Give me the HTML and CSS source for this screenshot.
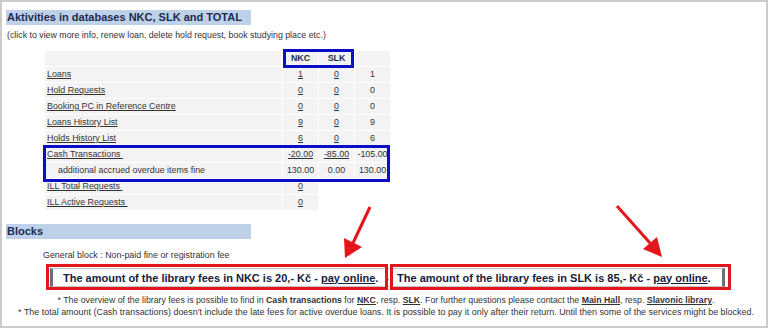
FILE: index.html
```html
<!DOCTYPE html>
<html>
<head>
<meta charset="utf-8">
<link rel="stylesheet" href="styles.css">
</head>
<body>
<div class="frame">
  <div class="section-title">Aktivities in databases NKC, SLK and TOTAL</div>
  <div class="hint">(click to view more info, renew loan, delete hold request, book studying place etc.)</div>
  <table class="activity">
    <tr class="head"><td class="label"></td><td class="num">NKC</td><td class="num">SLK</td><td class="num"></td></tr>
    <tr><td class="label"><a href="#">Loans</a></td><td class="num"><a href="#">1</a></td><td class="num"><a href="#">0</a></td><td class="num">1</td></tr>
    <tr><td class="label"><a href="#">Hold Requests</a></td><td class="num"><a href="#">0</a></td><td class="num"><a href="#">0</a></td><td class="num">0</td></tr>
    <tr><td class="label"><a href="#">Booking PC in Reference Centre</a></td><td class="num"><a href="#">0</a></td><td class="num"><a href="#">0</a></td><td class="num">0</td></tr>
    <tr><td class="label"><a href="#">Loans History List</a></td><td class="num"><a href="#">9</a></td><td class="num"><a href="#">0</a></td><td class="num">9</td></tr>
    <tr><td class="label"><a href="#">Holds History List</a></td><td class="num"><a href="#">6</a></td><td class="num"><a href="#">0</a></td><td class="num">6</td></tr>
    <tr><td class="label"><a href="#">Cash Transactions&nbsp;</a></td><td class="num"><a href="#">-20.00</a></td><td class="num"><a href="#">-85.00</a></td><td class="num">-105.00</td></tr>
    <tr><td class="label sub">additional accrued overdue items fine</td><td class="num">130.00</td><td class="num">0.00</td><td class="num">130.00</td></tr>
    <tr><td class="label"><a href="#">ILL Total Requests&nbsp;</a></td><td class="num"><a href="#">0</a></td><td class="blank"></td><td class="blank"></td></tr>
    <tr><td class="label"><a href="#">ILL Active Requests&nbsp;</a></td><td class="num"><a href="#">0</a></td><td class="blank"></td><td class="blank"></td></tr>
  </table>

  <div class="section-title blocks">Blocks</div>
  <div class="general">General block : Non-paid fine or registration fee</div>
  <div class="fees">
    <span class="fee">The amount of the library fees in NKC is 20,- Kč - <a href="#">pay online</a>.</span>
    <span class="sep">-</span>
    <span class="fee">The amount of the library fees in SLK is 85,- Kč - <a href="#">pay online</a>.</span>
  </div>
  <div class="notes">
    <p class="note-first">* The overview of the library fees is possible to find in <b>Cash transactions</b> for <a href="#">NKC</a>, resp. <a href="#">SLK</a>. For further questions please contact the <a href="#">Main Hall</a>, resp. <a href="#">Slavonic library</a>.</p>
    <p>* The total amount (Cash transactions) doesn't include the late fees for active overdue loans. It is possible to pay it only after their return. Until then some of the services might be blocked.</p>
  </div>

  <div class="mark blue mark-head"></div>
  <div class="mark blue mark-cash"></div>
  <div class="mark red mark-nkc"></div>
  <div class="mark red mark-slk"></div>
  <svg class="arrows" width="768" height="328" viewBox="0 0 768 328">
    <line x1="370" y1="207" x2="353" y2="243" stroke="#e3161c" stroke-width="3"/>
    <polygon points="345,258 344,238 362,247" fill="#e3161c"/>
    <line x1="617" y1="206" x2="650" y2="243" stroke="#e3161c" stroke-width="3"/>
    <polygon points="662,257 643,249 657,237" fill="#e3161c"/>
  </svg>
</div>
</body>
</html>
```
FILE: styles.css
```css
html, body {
  margin: 0;
  padding: 0;
  background: #fff;
}

.frame {
  position: relative;
  width: 768px;
  height: 328px;
  box-sizing: border-box;
  border: 2px solid #cbcbcb;
  padding: 8px 0 0 4px;
  font-family: "Liberation Sans", Arial, sans-serif;
  color: #333;
  overflow: hidden;
}

.section-title {
  width: 244px;
  height: 15px;
  line-height: 15px;
  padding-left: 1px;
  background: #bfd1e8;
  font-size: 11px;
  font-weight: bold;
  color: #1d2a50;
}

.hint {
  margin-top: 5px;
  font-size: 8.8px;
  line-height: 10px;
  padding-left: 1px;
  color: #333;
}

.activity {
  margin: 10px 0 0 38px;
  border-collapse: separate;
  border-spacing: 1px;
  font-size: 8.9px;
}

.activity td {
  height: 15px;
  line-height: 15px;
  padding: 0;
  background: #f3f3f3;
  white-space: nowrap;
}

.activity td.label {
  width: 235px;
  padding-left: 2px;
}

.activity td.sub {
  padding-left: 13px;
  width: 224px;
}

.activity td.num {
  width: 35px;
  text-align: center;
}

.activity td.blank {
  background: transparent;
}

.activity .head td {
  font-weight: bold;
  color: #1d2a50;
}

.activity a {
  color: #333;
  text-decoration: underline;
}

.blocks {
  margin-top: 13px;
}

.general {
  margin-top: 11px;
  padding-left: 37px;
  font-size: 8.9px;
  line-height: 10px;
  color: #333;
}

.fees {
  display: inline-flex;
  align-items: center;
  margin: 8px 0 0 44px;
  height: 17px;
  padding: 0 11px 0 10px;
  border-left: 3px solid #6e6e7a;
  border-right: 3px solid #6e6e7a;
  border-top: 1px solid #c4c4c8;
  border-bottom: 1px solid #c4c4c8;
  font-size: 11px;
  font-weight: bold;
  color: #161c3c;
  white-space: nowrap;
}

.fees a {
  color: #161c3c;
  text-decoration: underline;
}

.sep {
  margin: 0 8px 0 7px;
  color: #888;
}

.notes {
  margin-top: 7px;
  text-align: center;
  font-size: 8.95px;
  line-height: 12px;
  color: #333;
}

.notes p {
  margin: 0;
  white-space: nowrap;
}

.notes .note-first {
  font-size: 8.75px;
}

.notes b {
  color: #333;
}

.notes a {
  color: #333;
  font-weight: bold;
  text-decoration: underline;
}

.mark {
  position: absolute;
  box-sizing: border-box;
  border: 3px solid;
  pointer-events: none;
}

.blue { border-color: #0d0dc6; }
.red { border-color: #e3161c; }

.mark-head { left: 281px; top: 47px; width: 71px; height: 19px; }
.mark-cash { left: 41px; top: 143px; width: 347px; height: 37px; }
.mark-nkc { left: 44px; top: 262px; width: 342px; height: 26px; }
.mark-slk { left: 388px; top: 262px; width: 341px; height: 26px; }

.arrows {
  position: absolute;
  left: -2px;
  top: -2px;
  pointer-events: none;
}
```
